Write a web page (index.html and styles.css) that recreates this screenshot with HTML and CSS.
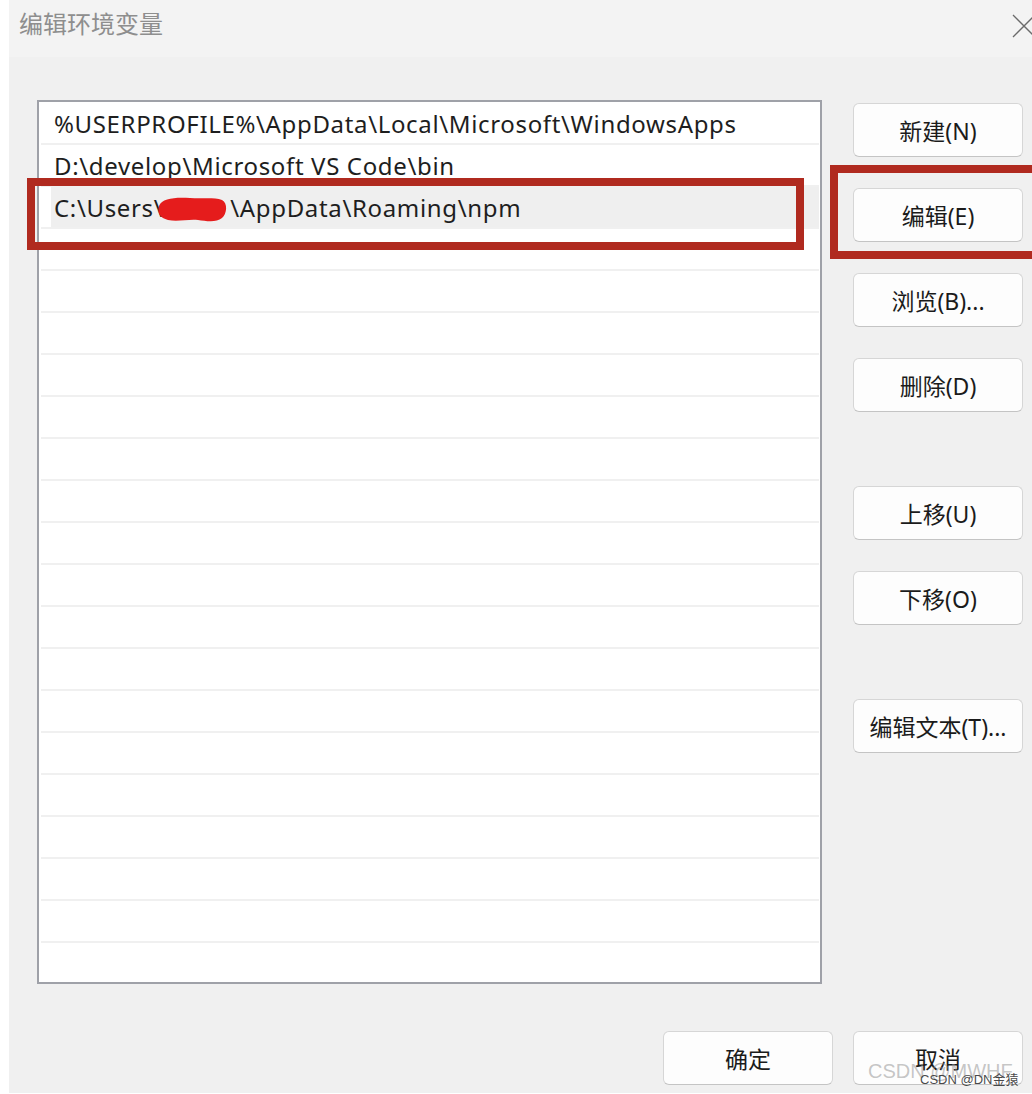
FILE: index.html
```html
<!DOCTYPE html>
<html lang="zh-CN">
<head>
<meta charset="utf-8">
<title>编辑环境变量</title>
<link rel="stylesheet" href="styles.css">
</head>
<body>
<div class="page">
  <div class="edge"></div>
  <div class="window">
    <div class="titlebar">
      <span class="title">编辑环境变量</span>
      <svg class="close" width="24" height="24" viewBox="0 0 24 24"><path d="M1 1 L23 23 M23 1 L1 23" stroke="#6a6a6a" stroke-width="1.3" fill="none"/></svg>
    </div>
    <div class="content">
      <div class="main">
        <div class="list">
          <div class="row"><div class="cell">%USERPROFILE%\AppData\Local\Microsoft\WindowsApps</div></div>
          <div class="row"><div class="cell">D:\develop\Microsoft VS Code\bin</div></div>
          <div class="row sel"><div class="cell">C:\Users\<span class="blob"><svg width="72" height="30" viewBox="0 0 72 30"><path d="M3 12 C6 4 20 3 34 4 C46 5 58 3 66 6 C72 9 71 20 66 24 C60 29 50 27 42 26 C32 25 22 28 12 26 C4 24 1 19 3 12 Z" fill="#e51c1c"/></svg></span>\AppData\Roaming\npm</div></div>
          <div class="row"><div class="cell"></div></div>
          <div class="row"><div class="cell"></div></div>
          <div class="row"><div class="cell"></div></div>
          <div class="row"><div class="cell"></div></div>
          <div class="row"><div class="cell"></div></div>
          <div class="row"><div class="cell"></div></div>
          <div class="row"><div class="cell"></div></div>
          <div class="row"><div class="cell"></div></div>
          <div class="row"><div class="cell"></div></div>
          <div class="row"><div class="cell"></div></div>
          <div class="row"><div class="cell"></div></div>
          <div class="row"><div class="cell"></div></div>
          <div class="row"><div class="cell"></div></div>
          <div class="row"><div class="cell"></div></div>
          <div class="row"><div class="cell"></div></div>
          <div class="row"><div class="cell"></div></div>
          <div class="row"><div class="cell"></div></div>
          <div class="row"><div class="cell"></div></div>
        </div>
        <div class="buttons">
          <button class="btn">新建(N)</button>
          <button class="btn">编辑(E)</button>
          <button class="btn">浏览(B)...</button>
          <button class="btn">删除(D)</button>
          <button class="btn far">上移(U)</button>
          <button class="btn">下移(O)</button>
          <button class="btn far">编辑文本(T)...</button>
        </div>
      </div>
      <div class="footer">
        <button class="btn">确定</button>
        <button class="btn">取消</button>
      </div>
    </div>
    <div class="mark mark-row"></div>
    <div class="mark mark-btn"></div>
    <div class="wm-big">CSDN @MWHF</div>
    <div class="wm-small">CSDN @DN金猿</div>
  </div>
</div>
</body>
</html>
```
FILE: styles.css
```css
* { box-sizing: border-box; }
html, body { margin: 0; padding: 0; background: #ffffff; }
body {
  width: 1032px;
  height: 1094px;
  overflow: hidden;
  font-family: "Noto Sans", "Noto Sans CJK SC", sans-serif;
  color: #1c1c1c;
}
.page { display: flex; height: 1093px; }
.edge { width: 9px; background: #ffffff; flex: none; }
.window {
  position: relative;
  flex: 1;
  background: #f0f0f0;
  overflow: hidden;
  display: flex;
  flex-direction: column;
}
.titlebar {
  height: 57px;
  flex: none;
  background: #f3f3f3;
  display: flex;
  align-items: center;
  padding-left: 10px;
}
.title {
  font-family: "Noto Sans CJK SC", sans-serif;
  font-size: 24px;
  color: #8e8e8e;
  line-height: 1;
  margin-top: -12px;
}
.close { margin-left: auto; margin-right: -4px; margin-top: -6px; flex: none; }
.content { padding: 43px 9px 0 28px; display: flex; flex-direction: column; }
.main { display: flex; gap: 31px; }
.list {
  width: 785px;
  height: 884px;
  background: #ffffff;
  border: 2px solid #9fa1a8;
  padding-top: 1px;
  overflow: hidden;
}
.row {
  height: 42px;
  margin-left: 2px;
  margin-right: 1px;
  padding-left: 10px;
  border-bottom: 2px solid #f0f0f0;
}
.cell {
  height: 100%;
  display: flex;
  align-items: center;
  padding-left: 3px;
  font-size: 24px;
  letter-spacing: 0.65px;
  color: #1e1e1e;
  white-space: nowrap;
}
.row.sel .cell { background: #efefef; }
.blob { display: inline-block; width: 72px; height: 30px; margin-top: 4px; margin-left: -7px; margin-right: 2px; }
.blob svg { display: block; }
.buttons { width: 170px; padding-top: 3px; display: flex; flex-direction: column; gap: 31px; }
.btn {
  width: 170px;
  height: 54px;
  flex: none;
  background: #fdfdfd;
  border: 1.5px solid #d6d6d6;
  border-bottom-color: #c4c4c4;
  border-radius: 6px;
  font-family: "Noto Sans", "Noto Sans CJK SC", sans-serif;
  font-size: 23px;
  color: #1b1b1b;
  padding: 0;
}
.btn.far { margin-top: 43px; }
.footer { display: flex; justify-content: flex-end; gap: 20px; margin-top: 47px; }
.mark { position: absolute; border: 8px solid #b02a1f; }
.mark-row { left: 18px; top: 178px; width: 777px; height: 72px; }
.mark-btn { left: 821px; top: 165px; width: 220px; height: 94px; }
.wm-big {
  position: absolute;
  left: 859px;
  top: 1060px;
  font-family: "Liberation Sans", sans-serif;
  font-size: 20px;
  color: rgba(150, 150, 150, 0.55);
  white-space: nowrap;
}
.wm-small {
  position: absolute;
  left: 911px;
  top: 1069px;
  font-family: "Liberation Sans", "Noto Sans CJK SC", sans-serif;
  font-size: 13px;
  color: rgba(40, 40, 40, 0.85);
  white-space: nowrap;
}
```
